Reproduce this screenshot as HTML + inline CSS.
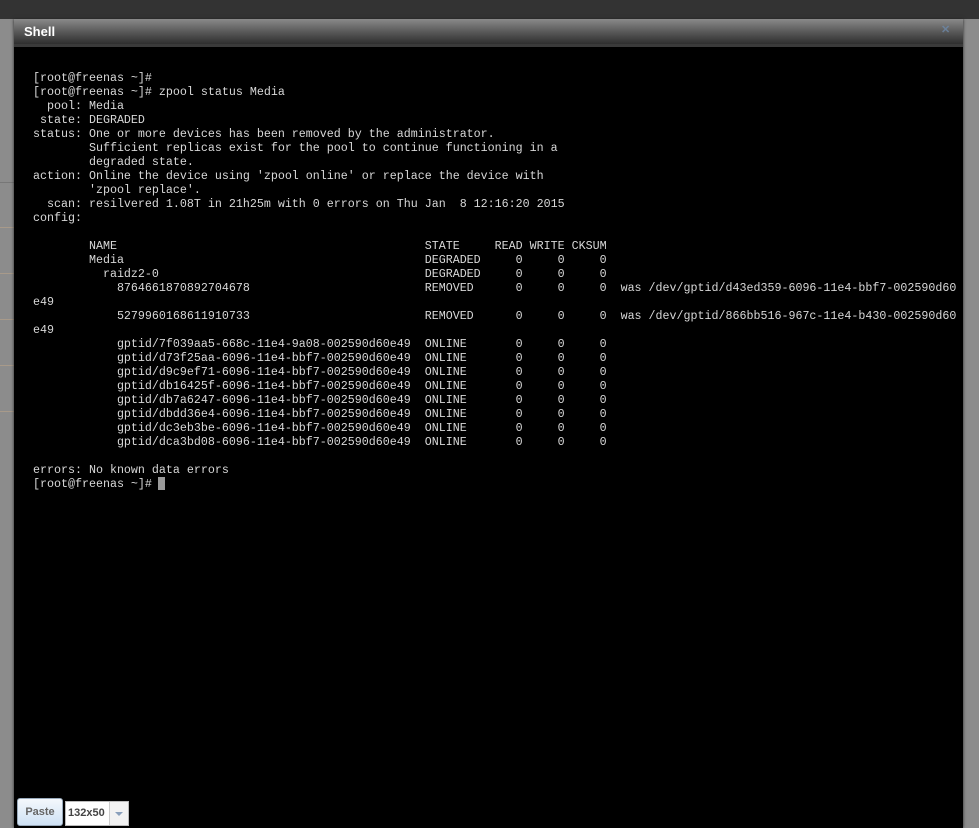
<!DOCTYPE html>
<html><head><meta charset="utf-8"><style>
html,body{margin:0;padding:0;width:979px;height:828px;overflow:hidden;background:#8a8a8a;position:relative;font-family:"Liberation Sans",sans-serif}
.top{position:absolute;left:0;top:0;width:979px;height:19px;background:#333}
.lstrip{position:absolute;left:0;top:19px;width:14px;height:809px;background:#8c8c8c}
.rstrip{position:absolute;left:963px;top:19px;width:16px;height:809px;background:#8c8c8c}
.hl{position:absolute;height:1px;background:#a89a8a}
.dlg{position:absolute;left:14px;top:19px;width:949px;height:809px;background:#000;box-shadow:0 0 3px #222}
.title{position:absolute;left:0;top:0;width:949px;height:25px;background:linear-gradient(#8a8a8a,#5a5a5a 50%,#2e2e2e);border-bottom:3px solid #3a3a3a}
.title span{position:absolute;left:10px;top:5px;color:#fff;font-weight:bold;font-size:13px}
.x{position:absolute;right:13px;top:7px;width:9px;height:9px;color:#6d88a8;font-size:11px;font-weight:bold;line-height:9px;text-align:center;opacity:.8}
pre{position:absolute;left:19px;top:52px;margin:0;font-family:"Liberation Mono",monospace;font-size:11.67px;line-height:14px;color:#d8d8d8}
.cur{position:absolute;left:144px;top:458px;width:7px;height:13px;background:#9a9a9a}
.paste{position:absolute;left:3px;top:779px;width:44px;height:26px;border:1px solid #9ab;border-radius:3px;background:linear-gradient(#f4f8fc,#cfe2f5);color:#666;font-size:11px;font-weight:bold;text-align:center;line-height:26px}
.sel{position:absolute;left:51px;top:782px;width:62px;height:23px;background:#fff;border:1px solid #bbb;font-size:11px;font-weight:bold;color:#444;line-height:23px}
.sel span{padding-left:2px}
.sel i{position:absolute;right:0;top:0;width:18px;height:23px;border-left:1px solid #ccc;background:#f2f2f2}
.sel i:after{content:"";position:absolute;left:5px;top:10px;border:4px solid transparent;border-top:4px solid #8aa0bc}
</style></head><body>
<div class="top"></div>
<div class="lstrip"></div>
<div class="rstrip"></div>
<div class="hl" style="left:0;top:182px;width:14px;background:#777"></div>
<div class="hl" style="left:0;top:227px;width:14px"></div>
<div class="hl" style="left:0;top:273px;width:14px"></div>
<div class="hl" style="left:0;top:319px;width:14px"></div>
<div class="hl" style="left:0;top:365px;width:14px"></div>
<div class="hl" style="left:0;top:411px;width:14px"></div>
<div class="dlg">
<div class="title"><span>Shell</span><div class="x">✕</div></div>
<pre>[root@freenas ~]#
[root@freenas ~]# zpool status Media
  pool: Media
 state: DEGRADED
status: One or more devices has been removed by the administrator.
        Sufficient replicas exist for the pool to continue functioning in a
        degraded state.
action: Online the device using 'zpool online' or replace the device with
        'zpool replace'.
  scan: resilvered 1.08T in 21h25m with 0 errors on Thu Jan  8 12:16:20 2015
config:

        NAME                                            STATE     READ WRITE CKSUM
        Media                                           DEGRADED     0     0     0
          raidz2-0                                      DEGRADED     0     0     0
            8764661870892704678                         REMOVED      0     0     0  was /dev/gptid/d43ed359-6096-11e4-bbf7-002590d60
e49
            5279960168611910733                         REMOVED      0     0     0  was /dev/gptid/866bb516-967c-11e4-b430-002590d60
e49
            gptid/7f039aa5-668c-11e4-9a08-002590d60e49  ONLINE       0     0     0
            gptid/d73f25aa-6096-11e4-bbf7-002590d60e49  ONLINE       0     0     0
            gptid/d9c9ef71-6096-11e4-bbf7-002590d60e49  ONLINE       0     0     0
            gptid/db16425f-6096-11e4-bbf7-002590d60e49  ONLINE       0     0     0
            gptid/db7a6247-6096-11e4-bbf7-002590d60e49  ONLINE       0     0     0
            gptid/dbdd36e4-6096-11e4-bbf7-002590d60e49  ONLINE       0     0     0
            gptid/dc3eb3be-6096-11e4-bbf7-002590d60e49  ONLINE       0     0     0
            gptid/dca3bd08-6096-11e4-bbf7-002590d60e49  ONLINE       0     0     0

errors: No known data errors
[root@freenas ~]#</pre>
<div class="cur"></div>
<div class="paste">Paste</div>
<div class="sel"><span>132x50</span><i></i></div>
</div>
</body></html>
